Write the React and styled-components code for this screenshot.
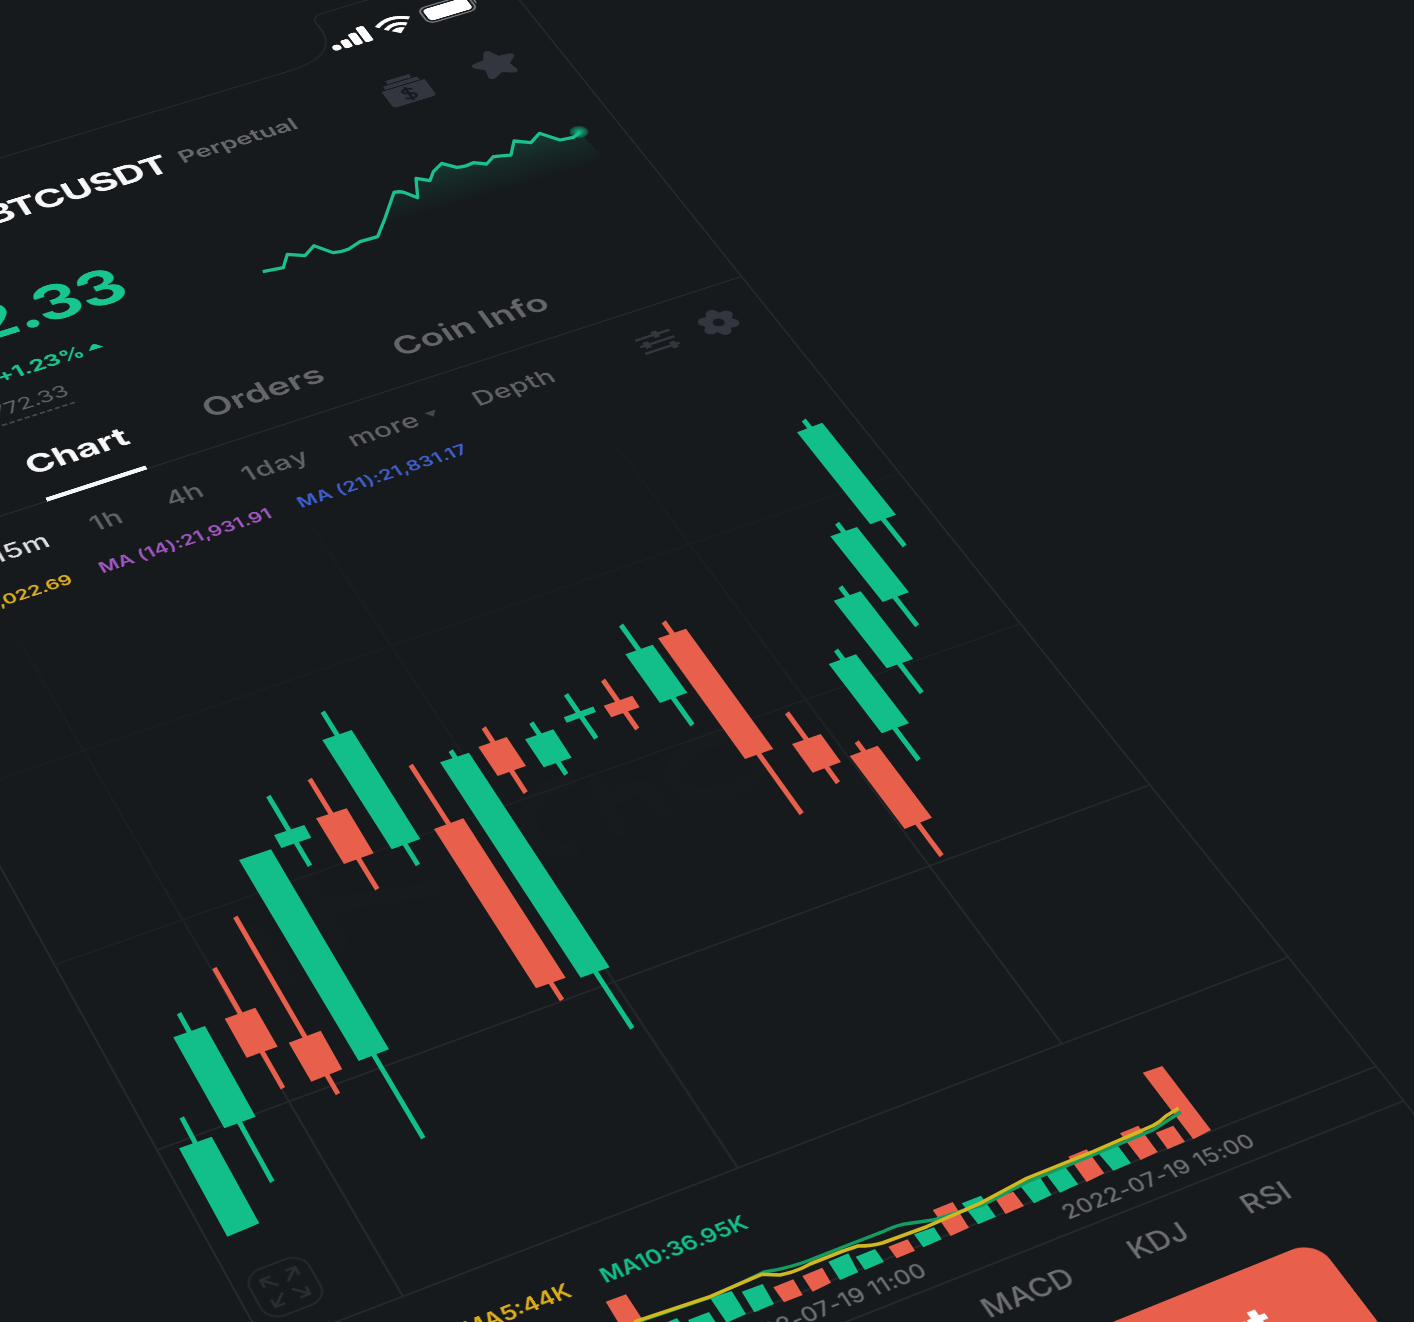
import React from "react";
import styled, { createGlobalStyle } from "styled-components";

const c = {
  bg: "#171a1d",
  line: "#25292c",
  green: "#12bf8a",
  red: "#e8604c",
  yellow: "#dcae1c",
  purple: "#a256c4",
  blue: "#3f5fd0",
  white: "#f6f7f8",
  grey: "#606266",
  icon: "#34363f",
};

const Global = createGlobalStyle`
  html, body { margin: 0; background: ${c.bg}; overflow: hidden; }
  * { box-sizing: border-box; }
`;

const Stage = styled.main`
  position: relative;
  width: 1414px;
  height: 1322px;
  overflow: hidden;
  background: ${c.bg};
  font-family: Inter, "Open Sans", sans-serif;
`;

/* The handset lies on a tilted plane; everything inside it is laid out upright. */
const Phone = styled.div`
  position: relative;
  display: flex;
  flex-direction: column;
  width: 1125px;
  height: 2436px;
  transform-origin: 0 0;
  transform: matrix3d(
    0.845422, -0.245511, 0, 0.00005407,
    0.326129, 0.484409, 0, -0.00012108,
    0, 0, 1, 0,
    -390.007, 234.305, 0, 1.083905
  );
`;

const Outline = styled.svg`
  position: absolute;
  inset: 0;
  width: 1125px;
  height: 2436px;
  overflow: visible;
`;

const Overlay = styled.svg`
  position: absolute;
  inset: 0;
  width: 1414px;
  height: 1322px;
`;

const Row = styled.div`
  display: flex;
  flex: none;
  align-items: center;
  height: ${(p) => p.$h}px;
  padding-left: ${(p) => p.$pl || 0}px;
  padding-top: ${(p) => p.$pt || 0}px;
`;

const Label = styled.span`
  flex: none;
  display: ${(p) => (p.$end ? "flex" : "block")};
  justify-content: flex-end;
  width: ${(p) => p.$w}px;
  margin-left: ${(p) => p.$ml || 0}px;
  font-size: ${(p) => p.$s}px;
  font-weight: ${(p) => p.$b || 500};
  letter-spacing: ${(p) => p.$ls || 0}px;
  color: ${(p) => p.$c || c.grey};
  line-height: 1.2;
  white-space: nowrap;
`;

const Glyph = styled.svg`
  flex: none;
  display: block;
  width: ${(p) => p.$w}px;
  height: ${(p) => p.$h}px;
  margin-left: ${(p) => p.$ml || 0}px;
  margin-top: ${(p) => p.$mt || 0}px;
  overflow: visible;
`;

const Summary = styled.section`
  flex: none;
  display: flex;
  flex-direction: column;
  align-items: flex-start;
  height: 313px;
  padding-top: 71px;
`;

const Price = styled.div`
  width: 471px;
  height: 100px;
  line-height: 100px;
  text-align: right;
  font-size: 87px;
  font-weight: 700;
  letter-spacing: -1px;
  color: #18c590;
`;

const Change = styled.div`
  display: flex;
  align-items: center;
  justify-content: flex-end;
  gap: 6px;
  width: 407px;
  height: 40px;
  margin-top: 25px;
  font-size: 29px;
  font-weight: 700;
  letter-spacing: -0.4px;
  color: #18c590;
`;

const Mark = styled.div`
  margin-top: 17px;
  margin-left: 178px;
  width: 163px;
  height: 46px;
  line-height: 40px;
  text-align: right;
  font-size: 29px;
  letter-spacing: -0.3px;
  color: ${c.grey};
  border-bottom: 3px dashed #43464a;
`;

const Tabs = styled.nav`
  flex: none;
  display: flex;
  height: 128px;
  padding-left: 251px;
  border-bottom: 2px solid ${c.line};
`;

const Tab = styled.div`
  flex: none;
  width: ${(p) => p.$w}px;
  height: 128px;
  margin-left: ${(p) => p.$ml || 0}px;
  line-height: 127px;
  font-size: 44.5px;
  font-weight: ${(p) => (p.$on ? 700 : 600)};
  letter-spacing: ${(p) => p.$ls || 0}px;
  white-space: nowrap;
  color: ${(p) => (p.$on ? c.white : "#64666a")};
  border-bottom: ${(p) => (p.$on ? `7px solid ${c.white}` : "none")};
`;

const ChartArea = styled.section`
  flex: none;
  display: flex;
  align-items: flex-start;
  height: 1110px;
  padding: 968px 0 0 13px;
`;

const VolumeArea = styled.section`
  flex: none;
  height: 88px;
  border-bottom: 2px solid ${c.line};
`;

const DateRow = styled(Row)`
  border-bottom: 2px solid ${c.line};
`;

const SellButton = styled.div`
  flex: none;
  display: flex;
  justify-content: flex-end;
  width: 430px;
  height: 132px;
  margin: 23px 0 0 524px;
  padding: 37px 88px 0 0;
  border-radius: 26px;
  background: ${c.red};
  color: #fff;
  font-size: 60px;
  font-weight: 700;
  line-height: 56px;
`;

const candles = [
  ["g", [181.7, 1117.3], "179,1148.3 211.7,1136.7 259.3,1223.3 227.3,1236.7", [215, 1180]],
  ["g", [179, 1013.3], "173.3,1037.3 205,1026 255.7,1116.7 224.3,1128.3", [272.3, 1181.7]],
  ["r", [214.3, 968], "224.7,1018.7 255.3,1007.7 277.7,1046.7 246.7,1057.7", [283, 1088.3]],
  ["r", [235.3, 916.7], "288.7,1042.7 320.7,1030.7 342.3,1069.3 311.3,1081.7", [338, 1094]],
  ["g", [257, 858], "239,860 271,849.3 389,1049.3 358.7,1061", [423.3, 1138.3]],
  ["g", [268.3, 796], "274,835 304.3,825 311.3,837.7 281.3,848", [310, 865.7]],
  ["r", [309.7, 779], "316,818.3 346.7,808.3 373.7,853.3 344,864", [377.3, 889.3]],
  ["g", [322.7, 711.7], "322.3,740 351.7,730 420.3,839 391.7,849.3", [418, 865]],
  ["r", [410.7, 765], "434,829 463.3,818.3 565.7,977.7 536,988.3", [562, 1000]],
  ["g", [450.7, 750.7], "440,762.3 469,752.7 609.7,967.3 580.7,977.7", [632.3, 1028.3]],
  ["r", [483.7, 727.7], "478.3,747 506.7,737 526,766 497.7,776", [525.7, 792.7]],
  ["g", [531.3, 722.7], "525,739.3 553.3,729.3 571.7,757.7 543.7,767.3", [566.3, 774.3]],
  ["g", [566, 694.3], "563.7,717.3 593.3,706.4 596,712 566.7,722.8", [596.3, 738.3]],
  ["r", [603, 680], "603.7,705.7 632.3,695.7 639.7,707.3 611.3,717.3", [637.3, 729]],
  ["g", [621, 625], "625.3,654.3 652.7,644.7 687.3,692.7 660,703", [692.5, 725]],
  ["r", [663.7, 621.7], "658,638.3 686,628.7 773.3,749 745,759", [801.7, 813.7]],
  ["r", [787, 712.7], "792,744 820.7,734 841,762 812.7,772.7", [838, 782.7]],
  ["r", [856.7, 741.7], "849.7,756 877.7,745.7 932,817.7 904.7,829", [941.7, 855.7]],
  ["g", [836, 650], "828.7,664 856,654.3 909,723.3 881.7,733.3", [918.7, 760]],
  ["g", [840.3, 586.7], "833.7,600.7 860.7,591.3 913.3,659 886.7,668.3", [921.8, 692.7]],
  ["g", [837, 523.3], "830.3,536.3 857,527 909,592.3 882.7,602", [917.2, 625.7]],
  ["g", [803.7, 420], "797,432.3 822.3,422.7 896,514.7 870.3,524.3", [904.7, 546]],
];

const volumes = [
  ["r", "605.7,1301.7 626,1294.3 652,1334 630,1342"],
  ["g", "658,1326 677,1318 688,1334 666,1340"],
  ["g", "688,1320 709,1312 722,1332 698,1336"],
  ["g", "710,1298 731.7,1291 746,1314 726.7,1322.7"],
  ["g", "741.7,1291.7 762.7,1284 774,1304 754.3,1312.3"],
  ["r", "773.3,1287.3 793.3,1279.3 802.7,1295 784,1302.3"],
  ["r", "802.3,1276 822.3,1267.7 831,1282.7 812.7,1291.7"],
  ["g", "828.3,1261.7 848.3,1253.3 858.3,1272.3 840,1280"],
  ["g", "855.7,1256.7 875,1249 884,1261.7 865,1270"],
  ["r", "888.3,1246.7 907.7,1239.3 915,1250.7 896.7,1258.3"],
  ["g", "914,1234.3 934,1227.3 941.7,1239.3 923.3,1247.3"],
  ["r", "932.7,1210 952.7,1202 969,1227.7 950.7,1236"],
  ["g", "961.7,1203.3 981,1195.7 996,1216.7 978.3,1224.3"],
  ["r", "995,1198.3 1013.3,1191.7 1024,1206 1005.7,1214"],
  ["g", "1020,1185.7 1040,1177.3 1051.7,1195 1034,1203.3"],
  ["g", "1046.7,1175 1065,1166.7 1078.3,1184.3 1060,1192.7"],
  ["r", "1068.3,1156.7 1086.7,1149.3 1104.3,1173.3 1086.7,1182"],
  ["g", "1098.3,1153.3 1117.3,1145 1131,1163.3 1113.3,1170.7"],
  ["r", "1120,1133.3 1138.3,1125.7 1157.7,1152 1140.7,1160"],
  ["r", "1155.7,1132.7 1173.3,1125.7 1185,1141.7 1167.7,1149.3"],
  ["r", "1142.7,1072.7 1162.3,1066 1211,1130 1193.3,1139.3"],
];

const spark =
  "M262.7 271.7L283.3 267.7L287.3 254.3L305 255.7L314 245.7L333.3 252.7Q342 252 348.3 249.3L360 241.7L377.7 236.7L385 218.3L394 192.3Q400 191 405 192.7L417.7 197.7L416 178.3L430 180.7L433.3 171.7L441.7 163.3L456.7 167.3Q465 167 473.3 162.7L486.7 164L493.3 156.7L511 155L514 141L531 142.7L539.3 133.3L560 140L573.3 137.3L580 132.7";

const tone = (k) => (k === "g" ? c.green : c.red);

function Candle({ data: [k, top, body, bottom] }) {
  return (
    <g fill={tone(k)} stroke={tone(k)}>
      <line x1={top[0]} y1={top[1]} x2={bottom[0]} y2={bottom[1]} strokeWidth="5" />
      <polygon points={body} stroke="none" />
    </g>
  );
}

function Charts() {
  return (
    <Overlay viewBox="0 0 1414 1322">
      <defs>
        <linearGradient id="area" gradientUnits="userSpaceOnUse" x1="494" y1="142" x2="508" y2="190">
          <stop offset="0" stopColor={c.green} stopOpacity="0.22" />
          <stop offset="0.5" stopColor={c.green} stopOpacity="0.09" />
          <stop offset="1" stopColor={c.green} stopOpacity="0" />
        </linearGradient>
        <radialGradient id="dot">
          <stop offset="0" stopColor={c.green} />
          <stop offset="0.5" stopColor={c.green} stopOpacity="0.6" />
          <stop offset="1" stopColor={c.green} stopOpacity="0.25" />
        </radialGradient>
      </defs>
      {/* faint brand mark behind the candles */}
      <g fill="none" stroke="#fff" strokeOpacity="0.009" strokeWidth="16">
        <path d="M575 779Q525 790 529 821Q538 856 580 849" />
        <path d="M592 778L622 836M618 803Q626 785 645 788L668 816" />
        <ellipse cx="718" cy="766" rx="46" ry="27" transform="rotate(-14 718 766)" />
        <path d="M302 872L345 950M330 905L440 888M250 925L292 985" />
      </g>
      <path d={spark + "L598 152L640 230L300 330Z"} fill="url(#area)" />
      <path d={spark} fill="none" stroke="#1cc08c" strokeWidth="3.3" strokeLinejoin="round" />
      <ellipse cx="579" cy="132" rx="9.5" ry="6" fill="url(#dot)" />
      {candles.map((d, i) => (
        <Candle key={i} data={d} />
      ))}
      {volumes.map(([k, p], i) => (
        <polygon key={i} points={p} fill={tone(k)} />
      ))}
      <g fill="none" strokeLinejoin="round">
        <path
          d="M640 1321L710 1297.5L764 1272Q790 1268 810 1260L843 1247L883 1231.7Q894 1226 903 1224.3L933 1220L960 1211.7L983 1205L1027 1182L1093 1155L1153 1130L1180.7 1112"
          stroke="#129e62"
          strokeWidth="3.4"
        />
        <path
          d="M634 1322L710 1296.7L761.7 1274.3Q772 1275 780 1275Q796 1272 810 1264L843 1251L858 1246Q872 1246 883 1242.7L926.7 1226.7L980 1203.3L1026.7 1178.3L1093 1151.7L1153 1125.7Q1160 1122 1166 1116L1178.5 1108.3"
          stroke="#d2b81f"
          strokeWidth="3.6"
        />
      </g>
    </Overlay>
  );
}

function Frame() {
  return (
    <Outline viewBox="0 0 1125 2436" fill="none">
      <defs>
        <linearGradient id="fade" gradientUnits="userSpaceOnUse" x1="0" y1="850" x2="0" y2="1650">
          <stop offset="0" stopColor="#181b1e" />
          <stop offset="0.6" stopColor="#1c2022" />
          <stop offset="1" stopColor={c.line} />
        </linearGradient>
      </defs>
      <path
        d="M0 2436V0M1125 2436V100Q1125 0 1025 0H895Q878 0 878 14V34Q874 90 806 90H0"
        stroke={c.line}
        strokeWidth="2"
      />
      <path
        d="M0 1077L1125 1077.1M0 1350L1125 1350.1M0 1623L1125 1623.1M0 1895L1125 1895.1M141 850L141.1 1895M499.5 850L499.6 1895M862 850L862.1 1895"
        stroke="url(#fade)"
        strokeWidth="2"
      />
    </Outline>
  );
}

export default function App() {
  return (
    <Stage>
      <Global />
      <Phone>
        <Frame />
        <Row $h={126} $pl={875}>
          <Glyph $w={54} $h={34} viewBox="0 0 54 34" fill="#fff">
            <rect x="0" y="21" width="11" height="12" rx="5" />
            <rect x="14" y="16" width="11" height="18" rx="4" />
            <rect x="28" y="8" width="11" height="26" rx="4" />
            <rect x="42" y="0" width="11" height="34" rx="4" />
          </Glyph>
          <Glyph $w={48} $h={34} $ml={11} viewBox="0 0 48 34">
            <g fill="none" stroke="#fff" strokeWidth="6.5">
              <path d="M2 12Q24 -6 46 12" />
              <path d="M10 22Q24 10 38 22" />
            </g>
            <path d="M15 27Q24 20 33 27L24 36Z" fill="#fff" />
          </Glyph>
          <Glyph $w={76} $h={36} $ml={14} viewBox="0 0 76 36">
            <rect x="1" y="1" width="67" height="34" rx="10" fill="none" stroke="#777a7e" strokeWidth="2.5" />
            <rect x="5" y="5" width="59" height="26" rx="6" fill="#fff" />
            <path d="M71 12Q76 18 71 24Z" fill="#777a7e" />
          </Glyph>
        </Row>
        <Row $h={126} $pl={304}>
          <Label $w={300} $s={50} $b={700} $ls={-0.6} $c={c.white} $end>
            BTCUSDT
          </Label>
          <Label $w={154} $ml={17} $s={33} $b={600} $c="#66686c">
            Perpetual
          </Label>
          <Glyph $w={58} $h={54} $ml={118} viewBox="0 0 58 54">
            <path d="M13 0H45V7H13ZM6 9H52V16H6ZM0 18H58V48Q58 54 52 54H6Q0 54 0 48Z" fill={c.icon} />
            <path
              d="M36 30Q34 26 29 26Q23 26 23 30Q23 34 29 35.500Q36 37 36 41Q36 46 29 46Q24 46 22 42M29 22V50"
              fill="none"
              stroke={c.bg}
              strokeWidth="3.6"
            />
          </Glyph>
          <Glyph $w={64} $h={64} $ml={59} $mt={6} viewBox="0 0 24 24">
            <path
              d="M12 3L14.700 8.600L20.800 9.400L16.300 13.700L17.500 20L12 16.900L6.500 20L7.700 13.700L3.200 9.400L9.300 8.600Z"
              fill={c.icon}
              stroke={c.icon}
              strokeWidth="3.6"
              strokeLinejoin="round"
            />
          </Glyph>
        </Row>
        <Summary>
          <Price>21,772.33</Price>
          <Change>
            <span>+1.23%</span>
            <Glyph $w={18} $h={10} viewBox="0 0 18 10">
              <path d="M0 10L6 2Q9 -1 12 2L18 10Z" fill="#18c590" />
            </Glyph>
          </Change>
          <Mark>≈21,772.33</Mark>
        </Summary>
        <Tabs>
          <Tab $w={121} $on>
            Chart
          </Tab>
          <Tab $w={142} $ml={96}>
            Orders
          </Tab>
          <Tab $w={198} $ml={97} $ls={0.2}>
            Coin Info
          </Tab>
        </Tabs>
        <Row $h={116} $pl={162}>
          <Label $w={70} $s={34} $ls={0.5} $c="#dcdddf">15m</Label>
          <Label $w={40} $ml={48} $s={34} $ls={1.5}>1h</Label>
          <Label $w={42} $ml={51} $s={34}>4h</Label>
          <Label $w={84} $ml={51} $s={34} $ls={1.6}>1day</Label>
          <Label $w={90} $ml={47} $s={34} $ls={0.5}>more</Label>
          <Glyph $w={14} $h={10} $ml={6} viewBox="0 0 14 10">
            <path d="M0 0H14L7 10Z" fill="#43464a" />
          </Glyph>
          <Label $w={102} $ml={46} $s={34} $ls={0.6}>Depth</Label>
          <Glyph $w={44} $h={42} $ml={109} $mt={4} viewBox="0 0 44 42">
            <g fill="none" stroke={c.icon} strokeWidth="4">
              <path d="M0 8H44M0 21H44M0 34H44" />
              <path d="M26 2V14M9 15V27M37 28V40" strokeWidth="7" />
            </g>
          </Glyph>
          <Glyph $w={46} $h={46} $ml={34} $mt={6} viewBox="0 0 46 46" fill={c.icon}>
            <circle cx="23" cy="23" r="12" fill="none" stroke={c.icon} strokeWidth="12" />
            {[0, 60, 120, 180, 240, 300].map((a) => (
              <circle key={a} cx="23" cy="6.5" r="7.5" transform={`rotate(${a} 23 23)`} />
            ))}
            <circle cx="23" cy="23" r="7" fill={c.bg} />
          </Glyph>
        </Row>
        <Row $h={26} $pl={24}>
          <Label $w={204} $s={23.5} $b={600} $ls={-0.3} $c={c.yellow} $end>
            MA (7):22,022.69
          </Label>
          <Label $w={206} $ml={34} $s={24} $b={600} $ls={0.1} $c={c.purple}>
            MA (14):21,931.91
          </Label>
          <Label $w={206} $ml={33} $s={24} $b={600} $ls={0.5} $c={c.blue}>
            MA (21):21,831.17
          </Label>
        </Row>
        <ChartArea>
          <Glyph $w={64} $h={64} viewBox="0 0 64 64">
            <g fill="none" stroke="#2b2e32" strokeWidth="2.6">
              <rect x="1" y="1" width="62" height="62" rx="18" strokeWidth="2" stroke="#25282c" />
              <path d="M27 27L14 14M14 24V14H24M37 27L50 14M40 14H50V24M27 37L14 50M14 40V50H24M37 37L50 50M50 40V50H40" />
            </g>
          </Glyph>
        </ChartArea>
        <Row $h={26} $pl={174}>
          <Label $w={113} $s={24} $b={600} $c={c.yellow} $end>
            MA5:44K
          </Label>
          <Label $w={160} $ml={34} $s={24} $b={600} $ls={-0.2} $c={c.green}>
            MA10:36.95K
          </Label>
        </Row>
        <VolumeArea />
        <DateRow $h={50} $pl={390} $pt={5}>
          <Label $w={212} $s={24} $ls={0.2} $c="#6c6e72" $end>
            2022-07-19 11:00
          </Label>
          <Label $w={212} $ml={153} $s={24} $ls={0.4} $c="#6c6e72">
            2022-07-19 15:00
          </Label>
        </DateRow>
        <Row $h={87} $pl={628}>
          <Label $w={98} $s={31} $ls={0.5} $c="#6c6e72">MACD</Label>
          <Label $w={64} $ml={62} $s={31} $c="#6c6e72">KDJ</Label>
          <Label $w={52} $ml={62} $s={31} $ls={0.8} $c="#6c6e72">RSI</Label>
        </Row>
        <SellButton>Short</SellButton>
      </Phone>
      <Charts />
    </Stage>
  );
}
